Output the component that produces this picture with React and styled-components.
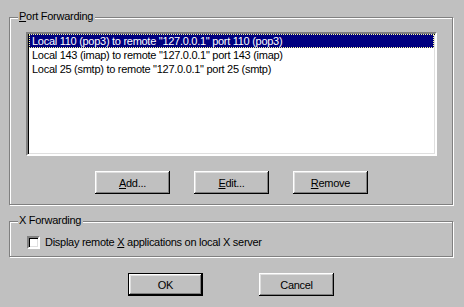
import React from 'react';
import styled, { createGlobalStyle } from 'styled-components';

const GlobalStyle = createGlobalStyle`
  html, body {
    margin: 0;
    padding: 0;
    background: #c0c0c0;
  }
  body {
    font-family: "Liberation Sans", Arial, sans-serif;
    font-size: 11px;
    letter-spacing: -0.28px;
    color: #000;
  }
`;

const forwards = [
  'Local 110 (pop3) to remote "127.0.0.1" port 110 (pop3)',
  'Local 143 (imap) to remote "127.0.0.1" port 143 (imap)',
  'Local 25 (smtp) to remote "127.0.0.1" port 25 (smtp)',
];

const App = () => (
  <Dialog>
    <GlobalStyle />
    <GroupBox>
      <Legend>
        <u>P</u>ort Forwarding
      </Legend>
      <ListBox>
        {forwards.map((text, i) => (
          <ListItem key={text} selected={i === 0}>
            {text}
          </ListItem>
        ))}
      </ListBox>
      <ButtonRow gap={24}>
        <Button>
          <u>A</u>dd...
        </Button>
        <Button>
          <u>E</u>dit...
        </Button>
        <Button>
          <u>R</u>emove
        </Button>
      </ButtonRow>
    </GroupBox>

    <GroupBox compact>
      <Legend>X Forwarding</Legend>
      <CheckRow>
        <CheckBox />
        <span>
          Display remote <u>X</u> applications on local X server
        </span>
      </CheckRow>
    </GroupBox>

    <ButtonRow gap={56}>
      <Button isDefault>OK</Button>
      <Button>Cancel</Button>
    </ButtonRow>
  </Dialog>
);

export default App;

const Dialog = styled.div`
  width: 464px;
  height: 307px;
  box-sizing: border-box;
  padding: 17px 11px 0 9px;
  display: flex;
  flex-direction: column;
  gap: 16px;
  background: #c0c0c0;
`;

const GroupBox = styled.div`
  position: relative;
  border: 1px solid #808080;
  box-shadow: inset 1px 1px 0 #fff, 1px 1px 0 #fff;
  padding: ${(p) => (p.compact ? '14px 16px 7px 17px' : '14px 15px 10px 16px')};
  display: flex;
  flex-direction: column;
  gap: 15px;
`;

const Legend = styled.span`
  position: absolute;
  top: -8px;
  left: 8px;
  padding: 0 2px 0 1px;
  line-height: 13px;
  background: #c0c0c0;
  white-space: nowrap;
`;

const ListBox = styled.div`
  height: 124px;
  box-sizing: border-box;
  background: #fff;
  border: 2px solid;
  border-color: #808080 #fff #fff #808080;
  box-shadow: inset 1px 1px 0 #000, inset -1px -1px 0 #dfdfdf;
  padding: 0 1px;
  display: flex;
  flex-direction: column;
`;

const ListItem = styled.div`
  height: 14px;
  line-height: 14px;
  padding-left: 3px;
  box-sizing: border-box;
  white-space: nowrap;
  background: ${(p) => (p.selected ? '#000080' : 'transparent')};
  color: ${(p) => (p.selected ? '#fff' : '#000')};
  outline: ${(p) => (p.selected ? '1px dotted #ffff9a' : 'none')};
  outline-offset: -1px;
`;

const ButtonRow = styled.div`
  display: flex;
  justify-content: center;
  gap: ${(p) => p.gap}px;
`;

const Button = styled.button`
  width: 75px;
  height: 23px;
  box-sizing: border-box;
  padding: 0;
  font-family: "Liberation Sans", Arial, sans-serif;
  font-size: 11px;
  letter-spacing: -0.28px;
  color: #000;
  background: #c0c0c0;
  border: ${(p) => (p.isDefault ? '1px solid #000' : 'none')};
  box-shadow: inset -1px -1px 0 #000, inset 1px 1px 0 #fff,
    inset -2px -2px 0 #808080, inset 2px 2px 0 #dfdfdf;
`;

const CheckRow = styled.div`
  display: flex;
  align-items: center;
  gap: 5px;
  height: 13px;
  line-height: 13px;
`;

const CheckBox = styled.span`
  width: 13px;
  height: 13px;
  box-sizing: border-box;
  background: #fff;
  border: 2px solid;
  border-color: #808080 #fff #fff #808080;
  box-shadow: inset 1px 1px 0 #000, inset -1px -1px 0 #dfdfdf;
`;
